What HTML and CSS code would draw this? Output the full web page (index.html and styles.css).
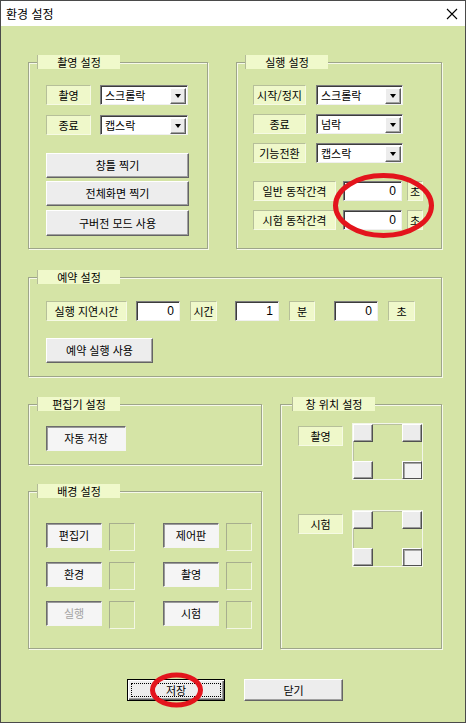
FILE: index.html
```html
<!DOCTYPE html>
<html lang="ko">
<head>
<meta charset="utf-8">
<title>환경 설정</title>
<link rel="stylesheet" href="styles.css">
</head>
<body>
<div class="window">
  <div class="titlebar">
    <span class="title">환경 설정</span>
    <svg class="close" width="12" height="12" viewBox="0 0 12 12"><path d="M1 1 L11 11 M11 1 L1 11" stroke="#000" stroke-width="1.1" fill="none"/></svg>
  </div>
  <div class="content">
    <div class="row-top">
      <div class="group g-capture">
        <div class="legend">촬영 설정</div>
        <div class="field">
          <span class="lbl w45">촬영</span>
          <div class="combo w88"><span>스크롤락</span><i class="drop"></i></div>
        </div>
        <div class="field gap10">
          <span class="lbl w45">종료</span>
          <div class="combo w88"><span>캡스락</span><i class="drop"></i></div>
        </div>
        <div class="btn-col">
          <div class="btn big">창틀 찍기</div>
          <div class="btn big">전체화면 찍기</div>
          <div class="btn big last">구버전 모드 사용</div>
        </div>
      </div>
      <div class="group g-run">
        <div class="legend">실행 설정</div>
        <div class="field">
          <span class="lbl w53">시작/정지</span>
          <div class="combo w87"><span>스크롤락</span><i class="drop"></i></div>
        </div>
        <div class="field gap9">
          <span class="lbl w53">종료</span>
          <div class="combo w87"><span>넘락</span><i class="drop"></i></div>
        </div>
        <div class="field gap9">
          <span class="lbl w53">기능전환</span>
          <div class="combo w87"><span>캡스락</span><i class="drop"></i></div>
        </div>
        <div class="field gap18 interval">
          <span class="lbl w83">일반 동작간격</span>
          <div class="num w59">0</div>
          <span class="lbl w16">초</span>
        </div>
        <div class="field gap9 interval">
          <span class="lbl w83">시험 동작간격</span>
          <div class="num w59">0</div>
          <span class="lbl w16">초</span>
        </div>
      </div>
    </div>

    <div class="group g-reserve">
      <div class="legend">예약 설정</div>
      <div class="field reserve-row">
        <span class="lbl w81">실행 지연시간</span>
        <div class="num w44 m9">0</div>
        <span class="lbl w27 m10">시간</span>
        <div class="num w44 m18">1</div>
        <span class="lbl w26 m10">분</span>
        <div class="num w44 m19">0</div>
        <span class="lbl w27 m10">초</span>
      </div>
      <div class="btn reserve-btn">예약 실행 사용</div>
    </div>

    <div class="row-bottom">
      <div class="left-col">
        <div class="group g-editor">
          <div class="legend">편집기 설정</div>
          <div class="btn pressed autosave">자동 저장</div>
        </div>
        <div class="group g-bg">
          <div class="legend">배경 설정</div>
          <div class="bg-row">
            <div class="btn pressed tog">편집기</div><div class="swatch"></div>
            <div class="btn pressed tog second">제어판</div><div class="swatch"></div>
          </div>
          <div class="bg-row">
            <div class="btn pressed tog">환경</div><div class="swatch"></div>
            <div class="btn pressed tog second">촬영</div><div class="swatch"></div>
          </div>
          <div class="bg-row">
            <div class="btn pressed tog disabled">실행</div><div class="swatch"></div>
            <div class="btn pressed tog second">시험</div><div class="swatch"></div>
          </div>
        </div>
      </div>
      <div class="group g-pos">
        <div class="legend">창 위치 설정</div>
        <div class="pos-row">
          <span class="lbl w45 pos-lbl">촬영</span>
          <div class="posbox">
            <div class="mini"></div><div class="mini"></div>
            <div class="mini"></div><div class="mini down"></div>
          </div>
        </div>
        <div class="pos-row second">
          <span class="lbl w45 pos-lbl">시험</span>
          <div class="posbox">
            <div class="mini"></div><div class="mini"></div>
            <div class="mini"></div><div class="mini down"></div>
          </div>
        </div>
      </div>
    </div>

    <div class="footer">
      <div class="btn foot default"><span class="focus">저장</span></div>
      <div class="btn foot">닫기</div>
    </div>
  </div>
  <svg class="marks" width="466" height="723" viewBox="0 0 466 723">
    <ellipse cx="383.5" cy="205.5" rx="48" ry="30" fill="none" stroke="#e3141c" stroke-width="5"/>
    <ellipse cx="176.5" cy="690" rx="24" ry="15" fill="none" stroke="#e3141c" stroke-width="5"/>
  </svg>
</div>
</body>
</html>
```

FILE: styles.css
```css
html, body {
  margin: 0;
  padding: 0;
  background: #d5e4a6;
}

.window {
  position: relative;
  width: 466px;
  height: 723px;
  box-sizing: border-box;
  border: 1px solid #4a4a4a;
  background: #d5e4a6;
  font-family: "Noto Sans CJK KR", "Noto Sans", sans-serif;
  font-size: 11px;
  color: #000;
  display: flex;
  flex-direction: column;
}

.titlebar {
  height: 25px;
  background: #fff;
  display: flex;
  align-items: center;
  justify-content: space-between;
  padding: 0 6px 0 5px;
  font-size: 12px;
  flex: none;
}

.close { margin-right: 1px; }

.content {
  padding: 36px 0 0 27px;
  display: flex;
  flex-direction: column;
}

/* group frames */
.group {
  position: relative;
  box-sizing: border-box;
  border: 1px solid #9ea58a;
  box-shadow: 1px 1px 0 #f6f9ea, inset 1px 1px 0 #f6f9ea;
}

.legend {
  position: absolute;
  top: -8px;
  left: 8px;
  width: 83px;
  height: 14px;
  box-sizing: border-box;
  background: #f0f9cb;
  border-left: 1px solid #b3ba98;
  display: flex;
  align-items: center;
  justify-content: center;
  line-height: 1;
}

.row-top {
  display: flex;
  gap: 28px;
}

.g-capture {
  width: 180px;
  height: 187px;
  padding: 22px 0 0 17px;
}

.g-run {
  width: 206px;
  height: 187px;
  padding: 22px 0 0 16px;
}

.g-reserve {
  margin-top: 28px;
  width: 414px;
  height: 100px;
  padding: 23px 0 0 17px;
}

.row-bottom {
  margin-top: 27px;
  display: flex;
  gap: 18px;
}

.left-col {
  width: 234px;
  display: flex;
  flex-direction: column;
  gap: 26px;
}

.g-editor {
  height: 61px;
  padding: 21px 0 0 17px;
}

.g-bg {
  height: 158px;
  padding: 31px 0 0 17px;
  display: flex;
  flex-direction: column;
  gap: 11px;
}

.g-pos {
  width: 162px;
  height: 245px;
  padding: 18px 0 0 17px;
}

.g-pos .legend { left: 11px; }

/* field rows */
.field {
  display: flex;
  align-items: flex-start;
  gap: 9px;
  height: 20px;
}

.gap9 { margin-top: 9px; }
.gap10 { margin-top: 10px; }
.gap18 { margin-top: 18px; }

.g-run .field { gap: 10px; }
.g-run .interval { gap: 0; }
.interval .num { margin-left: 7px; }
.interval .lbl.w16 { margin-left: 5px; }

.reserve-row { gap: 0; }
.m9 { margin-left: 9px; }
.m10 { margin-left: 10px; }
.m18 { margin-left: 18px; }
.m19 { margin-left: 19px; }

.lbl {
  box-sizing: border-box;
  height: 20px;
  background: #eff8ca;
  border: 1px solid;
  border-color: #b6bf99 #f6fae4 #f6fae4 #b6bf99;
  display: flex;
  align-items: center;
  justify-content: center;
  line-height: 1;
  white-space: nowrap;
  flex: none;
}

.w16 { width: 16px; }
.w26 { width: 26px; }
.w27 { width: 27px; }
.w44 { width: 44px; }
.w45 { width: 45px; }
.w53 { width: 53px; }
.w59 { width: 59px; }
.w81 { width: 81px; }
.w83 { width: 83px; }
.w87 { width: 87px; }
.w88 { width: 88px; }

.combo {
  box-sizing: border-box;
  height: 20px;
  background: #fff;
  border: 1px solid;
  border-color: #7c7c7c #f0f0f0 #f0f0f0 #7c7c7c;
  box-shadow: inset 1px 1px 0 #3c3c3c;
  display: flex;
  align-items: center;
  justify-content: space-between;
  padding: 0 1px 0 4px;
  line-height: 1;
  flex: none;
}

.drop {
  box-sizing: border-box;
  width: 16px;
  height: 16px;
  margin-top: 1px;
  background: #ececec;
  border: 1px solid;
  border-color: #fff #5e5e5e #5e5e5e #fff;
  box-shadow: inset -1px -1px 0 #a0a0a0;
  display: flex;
  align-items: center;
  justify-content: center;
}

.drop::after {
  content: "";
  width: 0;
  height: 0;
  border-left: 3.5px solid transparent;
  border-right: 3.5px solid transparent;
  border-top: 4px solid #000;
  margin: 1px 1px 0 0;
}

.num {
  box-sizing: border-box;
  height: 20px;
  background: #fff;
  border: 1px solid;
  border-color: #7c7c7c #f0f0f0 #f0f0f0 #7c7c7c;
  box-shadow: inset 1px 1px 0 #3c3c3c;
  display: flex;
  align-items: center;
  justify-content: flex-end;
  padding-right: 5px;
  font-family: "Liberation Sans", "Noto Sans", sans-serif;
  font-size: 12px;
  line-height: 1;
  flex: none;
}

/* buttons */
.btn {
  box-sizing: border-box;
  background: #ededed;
  border: 1px solid;
  border-color: #fff #646464 #646464 #fff;
  box-shadow: inset -1px -1px 0 #a0a0a0;
  display: flex;
  align-items: center;
  justify-content: center;
  line-height: 1;
  white-space: nowrap;
  flex: none;
}

.btn.pressed {
  background: #f5f5f5;
  border-color: #6c6c6c #f4f4f4 #f4f4f4 #6c6c6c;
  box-shadow: inset 1px 1px 0 #9a9a9a;
}

.btn.disabled {
  color: #a3a3a3;
}

.btn-col {
  margin-top: 18px;
  display: flex;
  flex-direction: column;
  gap: 3px;
}

.btn.big {
  width: 143px;
  height: 25px;
}

.btn.big.last { margin-top: 1px; height: 26px; }

.reserve-btn {
  margin-top: 17px;
  width: 107px;
  height: 25px;
}

.autosave {
  width: 80px;
  height: 25px;
}

.bg-row {
  display: flex;
  align-items: flex-start;
  height: 28px;
}

.tog {
  width: 56px;
  height: 25px;
}

.tog.second { margin-left: 28px; }

.swatch {
  box-sizing: border-box;
  width: 26px;
  height: 28px;
  margin-left: 7px;
  border: 1px solid;
  border-color: #a7ae8e #f3f7e4 #f3f7e4 #a7ae8e;
  flex: none;
}

.pos-row {
  display: flex;
  align-items: flex-start;
  gap: 10px;
}

.pos-row.second { margin-top: 30px; }

.pos-lbl { margin-top: 3px; }
.pos-row.second .pos-lbl { margin-top: 4px; }

.posbox {
  box-sizing: border-box;
  width: 71px;
  height: 57px;
  border: 1px solid #f3f6ea;
  box-shadow: inset 1px 1px 0 #b9c09f;
  display: grid;
  grid-template-columns: 20px 20px;
  grid-template-rows: 18px 18px;
  justify-content: space-between;
  align-content: space-between;
  margin-left: -1px;
}

.mini {
  box-sizing: border-box;
  width: 20px;
  height: 18px;
  background: #ececec;
  border: 1px solid;
  border-color: #fff #505050 #505050 #fff;
  box-shadow: inset -1px -1px 0 #9a9a9a;
}

.mini.down {
  background: #f2f2f2;
  border-color: #fff #505050 #505050 #fff;
  box-shadow: inset 1px 1px 0 #6e6e6e, inset 2px 2px 0 #a6a6a6;
}

.footer {
  margin-top: 30px;
  padding-left: 99px;
  display: flex;
  gap: 19px;
}

.btn.foot {
  width: 98px;
  height: 22px;
}

.btn.foot + .btn.foot { width: 99px; }

.btn.default {
  border: 1px solid #000;
  box-shadow: inset 1px 1px 0 #fff, inset -1px -1px 0 #646464, inset -2px -2px 0 #a0a0a0;
  padding: 3px;
}

.focus {
  flex: 1;
  align-self: stretch;
  border: 1px dotted #000;
  display: flex;
  align-items: center;
  justify-content: center;
}

.marks {
  position: absolute;
  top: -1px;
  left: -1px;
  pointer-events: none;
}
```
